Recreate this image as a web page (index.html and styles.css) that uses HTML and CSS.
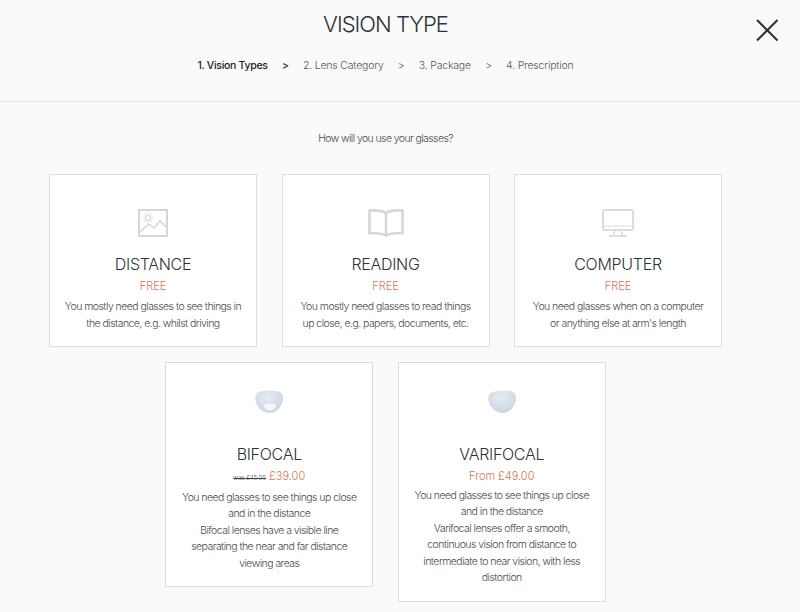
FILE: index.html
```html
<!DOCTYPE html>
<html lang="en">
<head>
  <meta charset="UTF-8">
  <meta name="viewport" content="width=device-width, initial-scale=1">
  <title>Vision Type</title>
  <link rel="stylesheet" href="styles.css">
</head>
<body>
  <div class="header">
    <h1>Vision Type</h1>
    <div class="steps">
      <span class="step active">1. Vision Types</span>
      <span class="sep active">&gt;</span>
      <span class="step">2. Lens Category</span>
      <span class="sep">&gt;</span>
      <span class="step">3. Package</span>
      <span class="sep">&gt;</span>
      <span class="step">4. Prescription</span>
    </div>
    <svg class="close" width="24" height="24" viewBox="0 0 24 24" aria-label="Close">
      <path d="M2 2 L22.500 22.500 M22.500 2 L2 22.500" fill="none" stroke="#27333a" stroke-width="2"/>
    </svg>
  </div>

  <div class="content">
    <p class="question">How will you use your glasses?</p>
    <div class="options">
      <div class="card">
        <svg class="icon" width="30" height="28" viewBox="0 0 30 28">
          <rect x="1" y="1" width="28" height="26" fill="none" stroke="#d6d6d6" stroke-width="2"/>
          <path d="M2 23 L11 15 L16 19 L22 12 L28 18" fill="none" stroke="#d6d6d6" stroke-width="1.600"/>
          <circle cx="10" cy="9" r="2.500" fill="none" stroke="#d6d6d6" stroke-width="1.200"/>
          <path d="M10 3.500 V5.500 M10 12.500 V14.500 M4.500 9 H6.500 M13.500 9 H15.500 M6 5 L7.500 6.500 M12.500 11.500 L14 13 M14 5 L12.500 6.500 M7.500 11.500 L6 13" stroke="#d6d6d6" stroke-width="1"/>
        </svg>
        <h2>Distance</h2>
        <div class="price">FREE</div>
        <p>You mostly need glasses to see things in the distance, e.g. whilst driving</p>
      </div>
      <div class="card">
        <svg class="icon" width="36" height="28" viewBox="0 0 36 28">
          <path d="M18 4 C15 1.500 9 1 1.500 1.500 V24 C9 24 14 24 18 26.500 C22 24 27 24 34.500 24 V1.500 C27 1 21 1.500 18 4 Z M18 4 V25" fill="none" stroke="#d6d6d6" stroke-width="2.600"/>
        </svg>
        <h2>Reading</h2>
        <div class="price">FREE</div>
        <p>You mostly need glasses to read things up close, e.g. papers, documents, etc.</p>
      </div>
      <div class="card">
        <svg class="icon" width="32" height="28" viewBox="0 0 32 28">
          <rect x="1" y="1" width="30" height="20" rx="2" fill="none" stroke="#dcdcdc" stroke-width="2"/>
          <path d="M1 17 H31" stroke="#dcdcdc" stroke-width="1"/>
          <path d="M13 21 L11.500 26 M19 21 L20.500 26" stroke="#dcdcdc" stroke-width="1.500"/>
          <path d="M7 27 H25" stroke="#dcdcdc" stroke-width="2"/>
        </svg>
        <h2>Computer</h2>
        <div class="price">FREE</div>
        <p>You need glasses when on a computer<br>or anything else at arm's length</p>
      </div>
      <div class="card lens-card">
        <svg class="icon lens" width="30" height="24" viewBox="0 0 30 24">
          <defs>
            <radialGradient id="lensFill" cx="0.45" cy="0.3" r="0.75">
              <stop offset="0" stop-color="#e6ebf2"/>
              <stop offset="1" stop-color="#c9d3e1"/>
            </radialGradient>
          </defs>
          <path d="M6 1.500 C11 0.500 20 0.500 25 1.500 C28 2.500 29.500 6 29 10 C28 17 22 23 15.500 23 C9 23 3 18 1.500 11 C0.500 6 2.500 2.500 6 1.500 Z" fill="url(#lensFill)"/>
          <path d="M10 14.500 C13 13.500 19 13.500 22 14.500 C22 18 19 20.500 16 20.500 C13 20.500 10 18 10 14.500 Z" fill="#f6f7f9"/>
        </svg>
        <h2>Bifocal</h2>
        <div class="price"><s class="was">was £45.00</s> £39.00</div>
        <p>You need glasses to see things up close and in the distance<br>Bifocal lenses have a visible line separating the near and far distance viewing areas</p>
      </div>
      <div class="card lens-card">
        <svg class="icon lens" width="30" height="24" viewBox="0 0 30 24">
          <path d="M6 2 C12 0.500 20 0.500 25 1.500 C28 2.500 29.500 6 29 10 C28 17 22 23 15.500 23 C9 23 3 18 1.500 11 C0.500 6 2.500 3 6 2 Z" fill="url(#lensFill)"/>
        </svg>
        <h2>Varifocal</h2>
        <div class="price">From £49.00</div>
        <p>You need glasses to see things up close and in the distance<br>Varifocal lenses offer a smooth, continuous vision from distance to intermediate to near vision, with less distortion</p>
      </div>
    </div>
  </div>
</body>
</html>
```

FILE: styles.css
```css
body {
  margin: 0;
  background: #fafafa;
  color: #2b3338;
  font-family: Inter, "Liberation Sans", sans-serif;
  font-weight: 300;
  font-size: 10.5px;
}
.header {
  position: relative;
  height: 101px;
  border-bottom: 1px solid #e0e0e0;
  padding-right: 29px;
  text-align: center;
}
.header h1 {
  margin: 0;
  padding-top: 11px;
  font-size: 22px;
  line-height: 27px;
  font-weight: 300;
  text-transform: uppercase;
  letter-spacing: -1px;
}
.steps {
  display: flex;
  justify-content: center;
  gap: 14.300px;
  margin-top: 20px;
  line-height: 16px;
  letter-spacing: -0.2px;
  color: #555;
}
.step.active, .sep.active {
  color: #222;
  font-weight: 500;
  letter-spacing: -0.3px;
}
.close {
  position: absolute;
  top: 18px;
  right: 21px;
}
.content {
  padding-right: 29px;
}
.question {
  margin: 0;
  padding-top: 29px;
  line-height: 16px;
  letter-spacing: -0.6px;
  text-align: center;
  color: #4a4a4a;
}
.options {
  display: flex;
  flex-wrap: wrap;
  justify-content: center;
  align-items: flex-start;
  gap: 15px 24.500px;
  margin-top: 27px;
}
.card {
  box-sizing: border-box;
  width: 208px;
  min-height: 173px;
  background: #fff;
  border: 1px solid #ddd;
  padding: 34px 14px 14px;
  text-align: center;
}
.icon {
  display: block;
  margin: 0 auto;
  height: 28px;
}
.icon.lens {
  height: 24px;
  margin-top: -7px;
}
.card h2 {
  margin: 16px 0 0;
  font-size: 16px;
  line-height: 22px;
  font-weight: 300;
  letter-spacing: -0.3px;
  text-transform: uppercase;
}
.lens-card h2 {
  margin-top: 29px;
}
.price {
  margin-top: 3px;
  font-size: 11px;
  line-height: 16px;
  color: #d4774f;
}
.was {
  font-size: 6px;
  color: #444;
}
.card p {
  margin: 5px 0 0;
  line-height: 16.500px;
  letter-spacing: -0.55px;
  color: #4a4a4a;
}
.lens-card p {
  margin-top: 3.500px;
}
```
